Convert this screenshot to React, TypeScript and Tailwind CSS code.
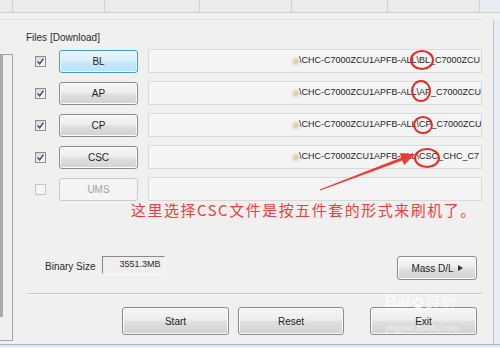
import React from "react";

type Row = { label: string; checked: boolean; focus?: boolean; disabled?: boolean; path: string };

const ROWS: Row[] = [
  { label: "BL", checked: true, focus: true, path: "\\CHC-C7000ZCU1APFB-ALL\\BL_C7000ZCU" },
  { label: "AP", checked: true, path: "\\CHC-C7000ZCU1APFB-ALL\\AP_C7000ZCU" },
  { label: "CP", checked: true, path: "\\CHC-C7000ZCU1APFB-ALL\\CP_C7000ZCU" },
  { label: "CSC", checked: true, path: "\\CHC-C7000ZCU1APFB-ALL\\CSC_CHC_C7" },
  { label: "UMS", checked: false, disabled: true, path: "" },
];

const btn =
  "flex items-center justify-center rounded-[3px] border border-[#8b8b8b] bg-[linear-gradient(#f7f7f7,#ededed_45%,#dedede_55%,#d2d2d2)] text-[10px] text-[#1e1e1e] shadow-[inset_0_0_0_1px_#fbfbfb]";

function CheckBox({ checked, disabled }: { checked: boolean; disabled?: boolean }) {
  return (
    <div
      className={
        disabled
          ? "w-[11px] h-[11px] border border-[#c6c6c6] bg-[#f6f6f6]"
          : "w-[11px] h-[11px] border border-[#8e8f8f] bg-[linear-gradient(135deg,#d6d6d6,#fbfbfb)] flex items-center justify-center"
      }
    >
      {checked && (
        <svg width="9" height="9" viewBox="0 0 9 9">
          <path d="M1.6 4.4 L3.6 6.8 L7.4 1.6" fill="none" stroke="#33457c" strokeWidth="1.4" />
        </svg>
      )}
    </div>
  );
}

export default function App() {
  return (
    <div className="relative w-[500px] h-[348px] overflow-hidden bg-[#f0f0f0] font-['Liberation_Sans',Arial,sans-serif] text-[10px] text-[#1e1e1e]">
      {/* tab strip */}
      <div className="flex h-[13px] border-b border-[#cdcdcd] bg-[#ebebeb]">
        <div className="w-[13px] border-r border-[#d0d0d0]" />
        <div className="w-[92px] border-r border-[#d0d0d0]" />
        <div className="w-[95px] border-r border-[#d0d0d0]" />
        <div className="w-[92px] border-r border-[#d0d0d0]" />
        <div className="w-[96px] border-r border-[#d0d0d0]" />
        <div className="w-[92px] border-r border-[#d0d0d0]" />
        <div className="flex-1 bg-[#e6ecf2]" />
      </div>
      <div className="h-[7px] border-b border-[#e0e0e0] mr-[17px]" />

      <div className="flex h-[324px]">
        {/* left log panel */}
        <div className="w-[13px] mt-[34px] mb-[3px] border-y border-r border-[#a3a3a3] flex">
          <div className="w-[3px] h-[262px] bg-[#ababab]" />
        </div>

        {/* main column */}
        <div className="ml-[13px] w-[457px] flex flex-col">
          <div className="mt-[12px] leading-[12px] text-[10px] text-[#2a2a2a]">Files [Download]</div>

          <div className="mt-[5px] flex flex-col gap-[8px]">
            {ROWS.map((r) => (
              <div key={r.label} className="flex items-center h-[24px]">
                <div className="ml-[9px]">
                  <CheckBox checked={r.checked} disabled={r.disabled} />
                </div>
                <div
                  className={
                    r.focus
                      ? "ml-[13px] w-[79px] h-[23px] flex items-center justify-center rounded-[3px] border border-[#3a9fd3] bg-[linear-gradient(#e9f6fd,#d9f0fc_45%,#c6e8fa_55%,#b9e2f7)] shadow-[inset_0_0_0_1px_#f2fbff] text-[10px] text-[#1e1e1e]"
                      : r.disabled
                      ? "ml-[13px] w-[79px] h-[23px] flex items-center justify-center rounded-[3px] border border-[#c9c9c9] bg-[#f4f4f4] text-[10px] text-[#a3a3a3]"
                      : "ml-[13px] w-[79px] h-[23px] " + btn
                  }
                >
                  {r.label}
                </div>
                <div className="ml-[10px] mr-[1px] flex-1 h-[24px] flex items-center overflow-hidden border border-[#dadada] bg-[#f4f4f4] shadow-[inset_0_1px_0_#fafafa]">
                  {r.path && (
                    <div className="flex items-center whitespace-nowrap pl-[144px] text-[9px] text-[#1e1e1e]">
                      <span className="w-[6px] h-[7px] rounded-full bg-[#d9cc9e] blur-[1.5px]" />
                      <span>{r.path}</span>
                    </div>
                  )}
                </div>
              </div>
            ))}
          </div>

          {/* binary size + mass d/l */}
          <div className="mt-[55px] flex h-[24px]">
            <div className="ml-[19px] mt-[5px] text-[10px] text-[#2a2a2a] leading-[12px]">Binary Size</div>
            <div className="ml-[6px] w-[63px] h-[18px] flex items-center justify-end pr-[3px] border-t border-l border-[#8a8a8a] border-b border-r border-b-[#f8f8f8] border-r-[#f8f8f8] bg-[#efefef] text-[9px] text-[#2a2a2a]">
              3551.3MB
            </div>
            <div className={"ml-auto mr-[6px] w-[80px] h-[24px] gap-[4px] " + btn}>
              <span>Mass D/L</span>
              <svg width="5" height="6" viewBox="0 0 5 6">
                <path d="M0 0 L5 3 L0 6 Z" fill="#333" />
              </svg>
            </div>
          </div>

          <div className="mt-[13px] ml-[1px] h-px bg-[#c9c9c9] shadow-[0_1px_0_#fbfbfb]" />

          <div className="mt-[13px] flex h-[28px]">
            <div className={"ml-[96px] w-[107px] " + btn}>Start</div>
            <div className={"ml-[9px] w-[106px] " + btn}>Reset</div>
            <div className={"ml-[26px] w-[107px] " + btn}>Exit</div>
          </div>
        </div>

        <div className="ml-[10px] w-px bg-[#b9c8d8]" />
        <div className="flex-1 bg-[#e6ecf2]" />
      </div>
      <div className="h-[3px] border-t border-[#a9b7c7] bg-[#e1e8f0]" />

      {/* annotation overlay */}
      <svg className="absolute left-0 top-0" width="500" height="348" viewBox="0 0 500 348">
        <ellipse cx="422" cy="60" rx="11" ry="9" fill="none" stroke="#e02b27" strokeWidth="2" />
        <ellipse cx="421" cy="91" rx="9" ry="10" fill="none" stroke="#e02b27" strokeWidth="2" />
        <ellipse cx="423" cy="125" rx="9" ry="8" fill="none" stroke="#e02b27" strokeWidth="2" />
        <ellipse cx="427" cy="158" rx="12" ry="9" fill="none" stroke="#e02b27" strokeWidth="2" />
        <polygon
          points="320.2,190.6 402.4,160.4 404.2,165 415,154 399.6,153.2 401.4,157.6 319.8,189.4"
          fill="#ee3a33"
        />
      </svg>
      <div className="absolute left-[131px] top-[200px] whitespace-nowrap text-[15px] leading-[20px] tracking-[1.5px] text-[#e8413c] font-['Noto_Sans_CJK_SC',sans-serif]">
        这里选择CSC文件是按五件套的形式来刷机了。
      </div>

      {/* watermark */}
      <div className="absolute left-[385px] top-[293px] flex items-end text-white/70 font-['Liberation_Sans',sans-serif]">
        <span className="text-[16px] font-bold leading-[18px]">Bai</span>
        <svg width="14" height="14" viewBox="0 0 14 14" className="mx-[1px]">
          <circle cx="3" cy="5" r="2" fill="rgba(255,255,255,0.7)" />
          <circle cx="6" cy="2" r="1.8" fill="rgba(255,255,255,0.7)" />
          <circle cx="9.5" cy="2.5" r="1.8" fill="rgba(255,255,255,0.7)" />
          <circle cx="11.5" cy="6" r="1.8" fill="rgba(255,255,255,0.7)" />
          <ellipse cx="7" cy="10" rx="3.5" ry="3" fill="rgba(255,255,255,0.7)" />
        </svg>
        <span className="text-[15px] leading-[18px] font-['Noto_Sans_CJK_SC',sans-serif]">经验</span>
      </div>
      <div className="absolute left-[386px] top-[322px] text-[9px] text-white/60">jingyan.baidu.com</div>
    </div>
  );
}
